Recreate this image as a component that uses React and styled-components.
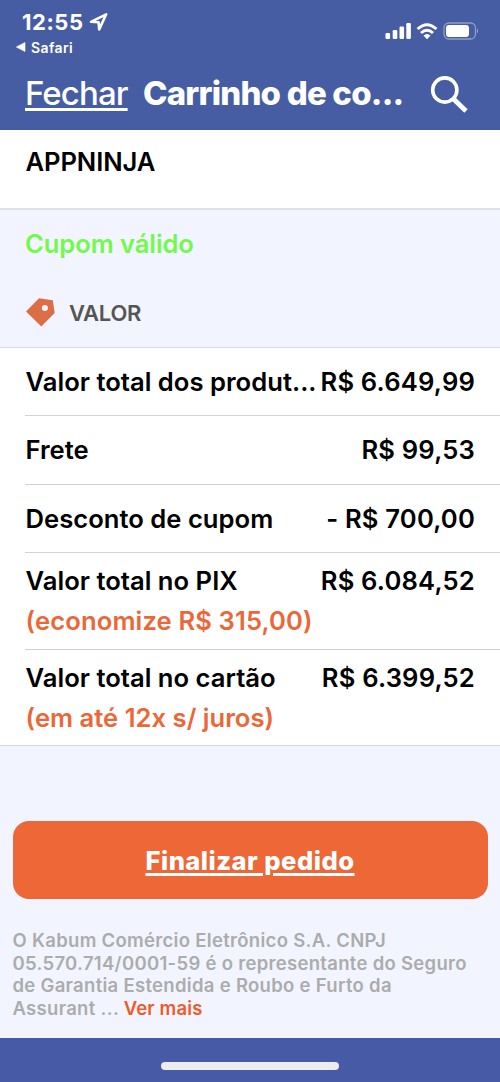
import styled, { createGlobalStyle } from 'styled-components';

const GlobalStyle = createGlobalStyle`
  * {
    box-sizing: border-box;
  }

  body {
    margin: 0;
    font-family: Inter, 'Liberation Sans', sans-serif;
    background: #f2f5ff;
    color: #000;
  }
`

const Screen = styled.div`
  display: flex;
  flex-direction: column;
  width: 500px;
  height: 1082px;
  overflow: hidden;
  background: #f2f5ff;
`

const Header = styled.header`
  display: flex;
  flex-direction: column;
  height: 129.5px;
  flex-shrink: 0;
  color: #fff;
  background: #465da3;
`

const StatusBar = styled.div`
  display: flex;
  justify-content: space-between;
  height: 57px;
  padding: 9px 21px 0 16px;
`

const Clock = styled.div`
  display: flex;
  align-items: center;
  gap: 5px;
  height: 26px;
  padding-left: 6px;
  font-size: 22px;
  font-weight: 700;
  letter-spacing: 0.55px;
`

const BackApp = styled.div`
  display: flex;
  align-items: center;
  gap: 5px;
  height: 24px;
  font-size: 14px;
  font-weight: 600;
  letter-spacing: 0.4px;
`

const StatusIcons = styled.div`
  display: flex;
  height: 20px;
  margin-top: 12px;
`

const NavBar = styled.div`
  display: flex;
  align-items: center;
  height: 72px;
  padding: 0 32px 0 25px;
`

const CloseLink = styled.a`
  width: 103px;
  margin-right: 15px;
  font-size: 33px;
  font-weight: 500;
  line-height: 40px;
  letter-spacing: -0.9px;
  white-space: nowrap;
  text-decoration: underline;
  text-decoration-thickness: 3px;
  text-underline-offset: 3px;
`

const Title = styled.h1`
  flex: 1;
  margin: 0;
  font-size: 33px;
  font-weight: 800;
  line-height: 40px;
  letter-spacing: -0.8px;
  white-space: nowrap;
`

const CouponField = styled.div`
  height: 80px;
  flex-shrink: 0;
  padding: 16px 25.5px;
  font-size: 25.6px;
  font-weight: 600;
  line-height: 32px;
  letter-spacing: -0.1px;
  background: #fff;
  border-bottom: 2px solid #dfe0e4;
`

const CouponStatus = styled.p`
  margin: 0;
  height: 70px;
  flex-shrink: 0;
  padding: 18px 25px 0;
  font-size: 25.6px;
  font-weight: 600;
  line-height: 32px;
  letter-spacing: -0.1px;
  color: #73f94b;
`

const SectionTitle = styled.h2`
  display: flex;
  align-items: center;
  gap: 14px;
  height: 68px;
  flex-shrink: 0;
  margin: 0;
  padding: 0 26px 1px;
  font-size: 22px;
  font-weight: 600;
  line-height: 26px;
  letter-spacing: -0.25px;
  color: #555;
  border-bottom: 1.5px solid #d9dae0;
`

const PriceList = styled.ul`
  display: flex;
  flex-direction: column;
  flex-shrink: 0;
  margin: 0;
  padding: 0 0 0 25px;
  list-style: none;
  background: #fff;
  border-bottom: 1.5px solid #d9dae0;
`

const PriceRow = styled.li`
  display: flex;
  flex-direction: column;
  justify-content: center;
  height: ${props => props.$height}px;
  padding: 1.5px 25px 0 0.5px;
  font-size: 25.6px;
  font-weight: 600;
  line-height: 40px;
  white-space: nowrap;

  & + & {
    border-top: 1px solid #d2d2d4;
  }
`

const PriceLine = styled.div`
  display: flex;
  justify-content: space-between;
`

const Label = styled.span`
  letter-spacing: 0.02px;
`

const Value = styled.span`
  letter-spacing: 0.18px;
`

const Note = styled.span`
  color: #ec6737;
  letter-spacing: ${props => props.$spacing}px;
`

const CheckoutButton = styled.button`
  height: 78px;
  flex-shrink: 0;
  margin: 75px 12.5px 0;
  padding: 1px 0 0;
  border: 0;
  border-radius: 16px;
  background: #ed6737;
  color: #fff;
  font-family: inherit;
  font-size: 25.6px;
  font-weight: 800;
  letter-spacing: 0.45px;
  text-decoration: underline;
  text-decoration-thickness: 3px;
  text-underline-offset: 3px;
`

const Legal = styled.p`
  flex: 1;
  margin: 0;
  padding: 30.5px 12.5px 0;
  font-size: 18.5px;
  font-weight: 600;
  line-height: 22.5px;
  letter-spacing: 0.3px;
  color: #acacac;
  white-space: nowrap;
`

const LegalLine = styled.span`
  display: block;
`

const More = styled.a`
  color: #f05a28;
  letter-spacing: 0.15px;
`

const Footer = styled.footer`
  display: flex;
  justify-content: center;
  height: 44px;
  flex-shrink: 0;
  padding-top: 23.5px;
  background: #465aa5;
`

const HomeIndicator = styled.div`
  width: 178px;
  height: 8px;
  border-radius: 4px;
  background: #ececec;
`

const prices = [
  { label: 'Valor total dos produt...', value: 'R$ 6.649,99', height: 67 },
  { label: 'Frete', value: 'R$ 99,53', height: 69 },
  { label: 'Desconto de cupom', value: '- R$ 700,00', height: 68 },
  { label: 'Valor total no PIX', value: 'R$ 6.084,52', note: '(economize R$ 315,00)', spacing: 0.12, height: 97 },
  { label: 'Valor total no cartão', value: 'R$ 6.399,52', note: '(em até 12x s/ juros)', spacing: 0.02, height: 96 },
]

function LocationIcon() {
  return (
    <svg width="20" height="20" viewBox="0 0 20 20" fill="none">
      <path d="M2 9.8 17.2 2.3 10.2 17.4 9.6 10.3Z" stroke="#fff" strokeWidth="2.6" strokeLinejoin="round" />
    </svg>
  )
}

function SystemIcons() {
  return (
    <svg width="95" height="20" viewBox="384 21 95 20" fill="none">
      <g fill="#fff">
        <rect x="385.5" y="33" width="4.6" height="6" rx="1.2" />
        <rect x="392.7" y="30" width="4.6" height="9" rx="1.2" />
        <rect x="399.5" y="26.5" width="4.6" height="12.5" rx="1.2" />
        <rect x="406.3" y="23" width="4.6" height="16" rx="1.2" />
        <path d="M427 39.2 423.5 35.6Q427 32.6 430.5 35.6Z" />
      </g>
      <path d="M417.6 29Q427 20.4 436.4 29" stroke="#fff" strokeWidth="3" />
      <path d="M421 33Q427 27.4 433 33" stroke="#fff" strokeWidth="3" />
      <rect x="444" y="23" width="31.5" height="16" rx="4.8" stroke="#8f9dca" strokeWidth="1.3" />
      <rect x="446" y="25" width="23" height="12" rx="3" fill="#fff" />
      <path d="M477 28.5Q479 31 477 33.5Z" fill="#a3aed3" />
    </svg>
  )
}

function SearchIcon() {
  return (
    <svg width="38" height="40" viewBox="0 0 38 40" fill="none" stroke="#fff">
      <circle cx="14.8" cy="17" r="12.1" strokeWidth="3.6" />
      <path d="M23.8 26.3 36 38" strokeWidth="4.8" />
    </svg>
  )
}

function TagIcon() {
  return (
    <svg width="29" height="29" viewBox="0 0 29 29">
      <path
        fill="#dc6e46"
        fillRule="evenodd"
        d="M0 13.6 13 .3 26.8 2.3 28.7 15 15.3 28.6ZM18.9 6.9a3 3 0 1 0 0 6 3 3 0 0 0 0-6Z"
      />
    </svg>
  )
}

function App() {

  return (
    <>
      <GlobalStyle/>
      <Screen>
        <Header>
          <StatusBar>
            <div>
              <Clock>12:55 <LocationIcon/></Clock>
              <BackApp>
                <svg width="10" height="10" viewBox="0 0 10 10">
                  <path d="M.3 5 9 .5v9Z" fill="#fff" stroke="#fff" strokeWidth=".6" strokeLinejoin="round" />
                </svg>
                Safari
              </BackApp>
            </div>
            <StatusIcons><SystemIcons/></StatusIcons>
          </StatusBar>
          <NavBar>
            <CloseLink>Fechar</CloseLink>
            <Title>Carrinho de co...</Title>
            <SearchIcon/>
          </NavBar>
        </Header>
        <CouponField>APPNINJA</CouponField>
        <CouponStatus>Cupom válido</CouponStatus>
        <SectionTitle><TagIcon/>VALOR</SectionTitle>
        <PriceList>
          {prices.map(({ label, value, note, spacing, height }) => (
            <PriceRow key={label} $height={height}>
              <PriceLine>
                <Label>{label}</Label>
                <Value>{value}</Value>
              </PriceLine>
              {note && <Note $spacing={spacing}>{note}</Note>}
            </PriceRow>
          ))}
        </PriceList>
        <CheckoutButton>Finalizar pedido</CheckoutButton>
        <Legal>
          <LegalLine>O Kabum Comércio Eletrônico S.A. CNPJ</LegalLine>
          <LegalLine>05.570.714/0001-59 é o representante do Seguro</LegalLine>
          <LegalLine>de Garantia Estendida e Roubo e Furto da</LegalLine>
          <LegalLine>Assurant ... <More>Ver mais</More></LegalLine>
        </Legal>
        <Footer><HomeIndicator/></Footer>
      </Screen>
    </>
  );
}

export default App;
